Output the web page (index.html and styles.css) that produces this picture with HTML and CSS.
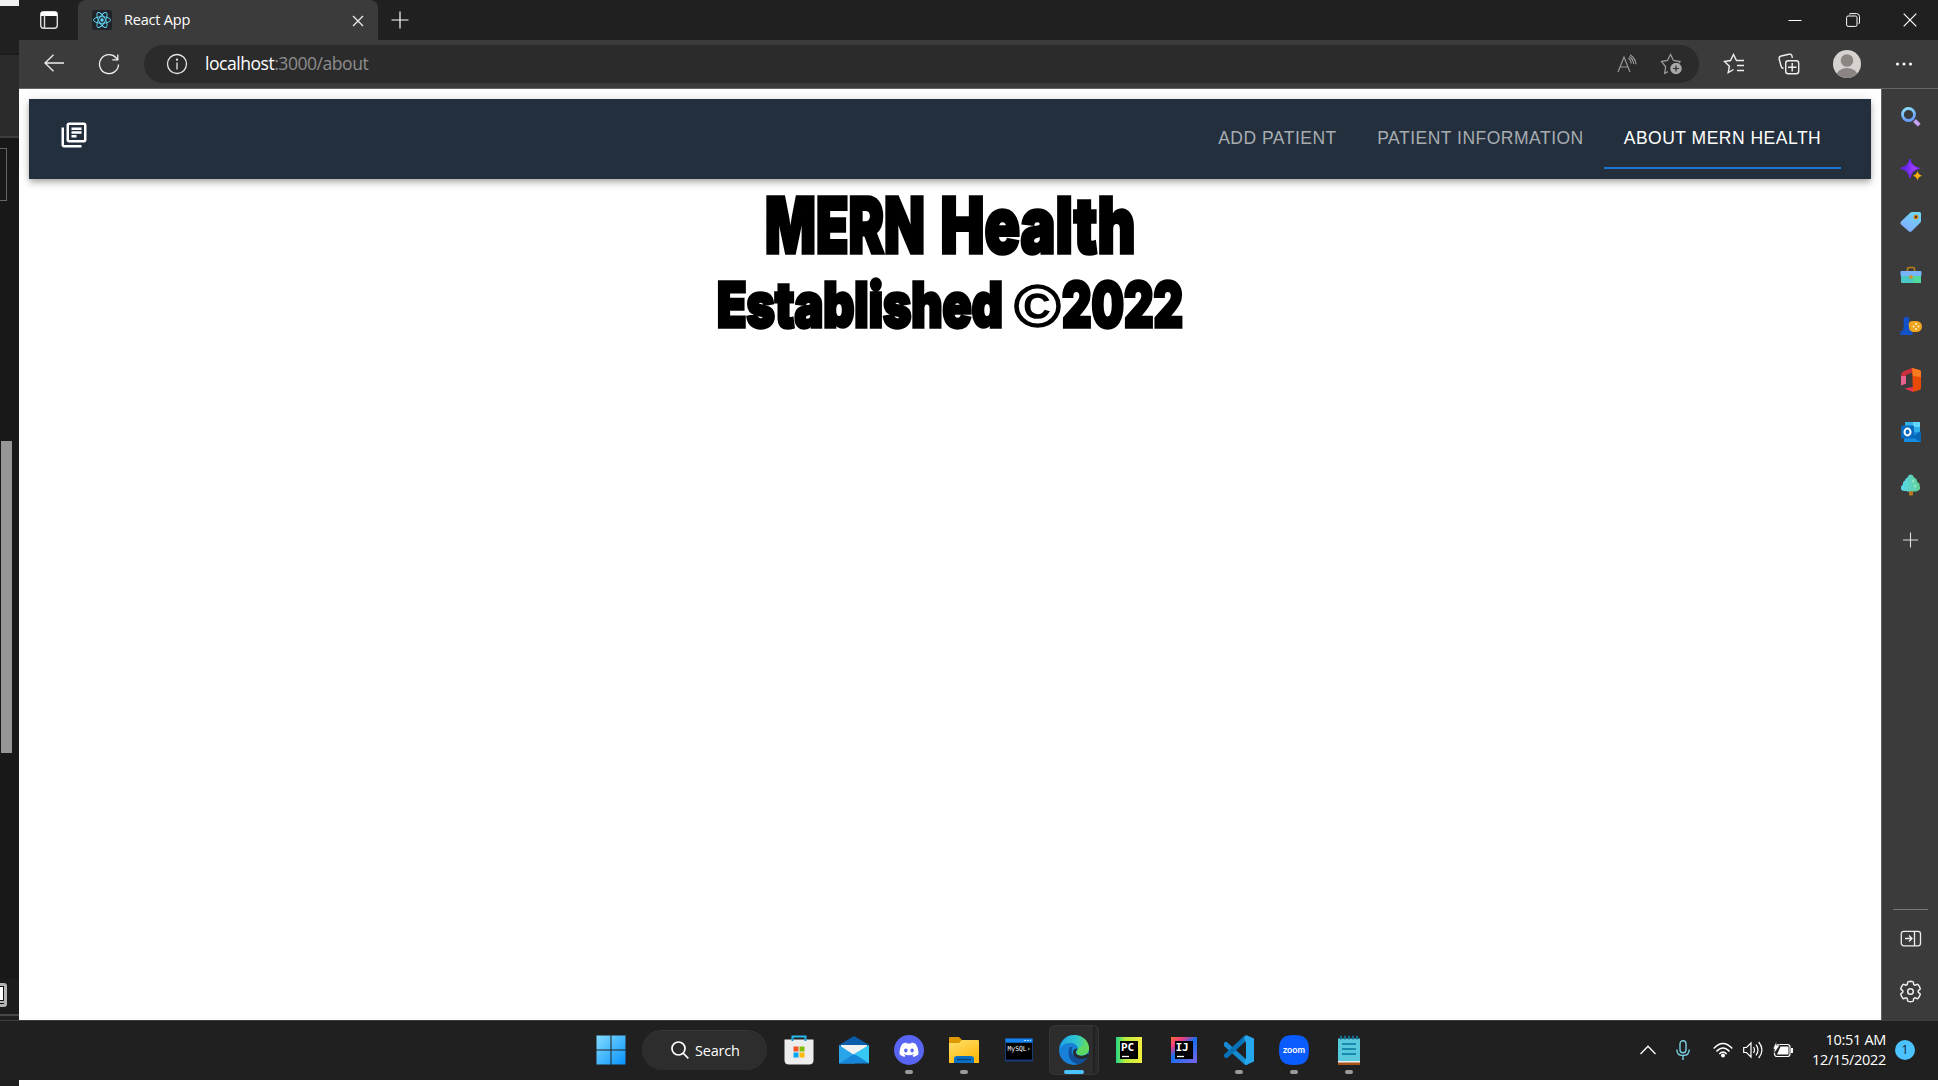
FILE: index.html
```html
<!DOCTYPE html>
<html lang="en">
<head>
<meta charset="utf-8">
<title>React App</title>
<link rel="stylesheet" href="styles.css">
</head>
<body>
<div class="desktop">
  <div class="screen">
    <aside class="backdrop">
      <div class="bd-white"></div><div class="bd-title"></div><div class="bd-tools"></div>
      <div class="bd-body"><div class="bd-box"></div><div class="bd-thumb"></div></div>
      <div class="bd-status"><svg width="19" height="35" viewBox="0 0 19 35"><rect x="-12" y="4" width="19" height="24" rx="3" fill="#b4b4b4"/><rect x="-10" y="7.500" width="13.500" height="14" fill="#fff" stroke="#111"/><path d="M0 24.500h4" stroke="#111"/></svg></div>
    </aside>
    <div class="browser">
      <header class="tabstrip">
        <svg class="workspaces" width="20" height="20" viewBox="0 0 20 20" fill="none" stroke="#ddd" stroke-width="1.4"><rect x="1.700" y="1.700" width="16.600" height="16.600" rx="3"/><path d="M2 4h16" stroke="#fff" stroke-width="4"/><path d="M5.500 5v13"/></svg>
        <div class="tab">
          <svg width="20" height="20" viewBox="0 0 20 20"><rect width="20" height="20" rx="2" fill="#20232a"/><g fill="none" stroke="#61dafb" stroke-width=".9"><ellipse cx="10" cy="10" rx="8.500" ry="3.300"/><ellipse cx="10" cy="10" rx="8.500" ry="3.300" transform="rotate(60 10 10)"/><ellipse cx="10" cy="10" rx="8.500" ry="3.300" transform="rotate(120 10 10)"/></g><circle cx="10" cy="10" r="1.700" fill="#61dafb"/></svg>
          <span class="tab-title">React App</span>
          <svg class="tab-close" width="12" height="12" viewBox="0 0 12 12" stroke="#eee" stroke-width="1.300"><path d="M1 1l10 10M11 1L1 11"/></svg>
        </div>
        <svg class="newtab" width="18" height="18" viewBox="0 0 18 18" stroke="#fff" stroke-width="1.200"><path d="M9 .5v17M.5 9h17"/></svg>
        <div class="winctl">
          <svg width="14" height="14" viewBox="0 0 14 14"><path d="M.5 7.500h13" stroke="#fff"/></svg>
          <svg width="14" height="14" viewBox="0 0 14 14" fill="none" stroke="#fff"><rect x=".6" y="3" width="10.400" height="10.400" rx="1.500"/><path d="M3 1.500Q3.500.6 5 .6h5.500q3 0 3 3V9q0 1.500-1 2"/></svg>
          <svg width="14" height="14" viewBox="0 0 14 14" stroke="#fff" stroke-width="1.200"><path d="M.7.7l12.600 12.600M13.300.7L.7 13.300"/></svg>
        </div>
      </header>
      <div class="toolbar">
        <svg class="back" width="20" height="18" viewBox="0 0 20 18" fill="none" stroke="#f0f0f0" stroke-width="1.300"><path d="M9.500.7L1 9l8.500 8.300M1 9h19"/></svg>
        <svg class="reload" width="22" height="22" viewBox="0 0 22 22" fill="none" stroke="#f0f0f0" stroke-width="1.300"><path d="M20.500 11.500A9.500 9.500 0 1 1 18 4.700l1.800 2M19.800 1.500v5.300h-5.500"/></svg>
        <div class="address">
          <svg width="22" height="22" viewBox="0 0 22 22" fill="none" stroke="#e6e6e6" stroke-width="1.300"><circle cx="11" cy="11" r="9.500"/><path d="M11 9.500v7"/><circle cx="11" cy="6.700" r=".5"/></svg>
          <span class="url"><b>localhost</b>:3000/about</span>
          <svg class="aloud" width="20" height="20" viewBox="0 0 20 20" fill="none" stroke="#999" stroke-width="1.200"><path d="M1 18L7 3l6 15M3.200 13h7.600M11.500 4q2.500 2 2.800 5.500M13 .8q5.500 3.500 6 9.500M12.300 2.500q4 2.500 4.400 7.500"/></svg>
          <svg class="addfav" width="22" height="22" viewBox="0 0 22 22"><path d="M8 18.700l-3.300 1.600.9-6.500L1.500 8.500l6-1L10.500 1.500l3 6 6.500 1-1.300 2" fill="none" stroke="#999" stroke-width="1.300"/><circle cx="16" cy="15.500" r="5.700" fill="#a8a8a8"/><path d="M16 12.500v6M13 15.500h6" stroke="#2b2b2b" stroke-width="1.200"/></svg>
        </div>
        <svg class="favs" width="22" height="22" viewBox="0 0 22 22" fill="none" stroke="#eee" stroke-width="1.400"><path d="M10.500 16.500l-5.300 3.200 1.200-6.500L1.500 8.500l6-1L10.500 1.500l3 6h7.500M14 12.500h7M14 17.500h7"/></svg>
        <svg class="colls" width="22" height="22" viewBox="0 0 22 22" fill="none" stroke="#eee" stroke-width="1.400"><rect x="7.700" y="7.700" width="13" height="13" rx="2.500"/><path d="M14.200 10v8.500M10 14.200h8.500M5.500 15.500q-2-.5-2.500-2.500L1.200 6q-.5-2.500 2-3L11 1.200q2.500-.5 3 2l.3 1.800"/></svg>
        <svg class="avatar" width="28" height="28" viewBox="0 0 28 28"><clipPath id="av"><circle cx="14" cy="14" r="14"/></clipPath><g clip-path="url(#av)"><rect width="28" height="28" fill="#d5d2cf"/><circle cx="14" cy="10.500" r="6.300" fill="#8b8683"/><ellipse cx="14" cy="25.500" rx="10.500" ry="7.500" fill="#8b8683"/></g></svg>
        <svg class="dots" width="18" height="4" viewBox="0 0 18 4" fill="#fff"><circle cx="2.500" cy="2" r="1.500"/><circle cx="9" cy="2" r="1.500"/><circle cx="15.500" cy="2" r="1.500"/></svg>
      </div>
      <div class="main">
        <main class="page">
          <nav class="appbar">
            <svg width="30" height="30" viewBox="0 0 24 24" fill="#fff"><path d="M4 6H2v14c0 1.100.9 2 2 2h14v-2H4V6zm16-4H8c-1.100 0-2 .9-2 2v12c0 1.100.9 2 2 2h12c1.100 0 2-.9 2-2V4c0-1.100-.9-2-2-2zm0 14H8V4h12v12zM10 9h8v2h-8zm0 3h4v2h-4zm0-6h8v2h-8z"/></svg>
            <div class="navtabs"><a class="t1">ADD PATIENT</a><a class="t2">PATIENT INFORMATION</a><a class="t3 active">ABOUT MERN HEALTH</a></div>
          </nav>
          <svg class="headline" width="500" height="160" viewBox="700 180 500 160">
            <g font-size="77.500"><text x="765" y="252.500" textLength="160" lengthAdjust="spacingAndGlyphs">MERN</text><text x="940.500" y="252.500" textLength="195" lengthAdjust="spacingAndGlyphs">Health</text></g>
            <g font-size="61.500"><text x="717" y="326.500" textLength="286" lengthAdjust="spacingAndGlyphs">Established</text><text class="copy" x="1014" y="327" font-size="60" textLength="47" lengthAdjust="spacingAndGlyphs">©</text><text x="1062" y="326.500" textLength="121" lengthAdjust="spacingAndGlyphs">2022</text></g>
          </svg>
        </main>
        <aside class="sidebar">
          <svg class="s" width="22" height="22" viewBox="0 0 22 22"><defs><linearGradient id="lens" x2=".3" y2="1"><stop stop-color="#8be0f8"/><stop offset="1" stop-color="#6b9dfa"/></linearGradient></defs><circle cx="8.500" cy="8.500" r="6" fill="none" stroke="url(#lens)" stroke-width="2.800"/><path d="M14.500 14.500l4.700 4.700" stroke="#c7a0f4" stroke-width="4"/></svg>
          <svg class="s" width="22" height="22" viewBox="0 0 22 22"><defs><linearGradient id="spark"><stop stop-color="#4218e8"/><stop offset="1" stop-color="#c44dfc"/></linearGradient></defs><path d="M10 0q1.500 7.500 9.500 9.300Q11.500 11 10 19 8.500 11 .5 9.300 8.500 7.500 10 0z" fill="url(#spark)" stroke="#7026f0"/><path d="M17.500 12q.8 3.800 4.500 4.700-3.700.9-4.500 4.700-.8-3.800-4.500-4.700 3.700-.9 4.500-4.700z" fill="#f5ad0c"/></svg>
          <svg class="s" width="22" height="22" viewBox="0 0 22 22"><defs><linearGradient id="tag" x1=".8" x2=".2" y2="1"><stop stop-color="#6fd8f6"/><stop offset="1" stop-color="#83a8ff"/></linearGradient></defs><path d="M12 1h7.500Q21 1 21 2.500V10q0 1-.8 1.700l-8.500 8.600q-1.500 1.300-3 0L1 13.500q-1.200-1.500 0-3L10.500 1.600Q11 1 12 1z" fill="url(#tag)"/><circle cx="16" cy="6" r="2.500" fill="#d58b20"/><circle cx="16" cy="6" r="1.200" fill="#553312"/></svg>
          <svg class="s" width="22" height="22" viewBox="0 0 22 22"><path d="M7.500 7V5q0-1.500 1.500-1.500h4q1.500 0 1.500 1.500v2" fill="none" stroke="#b87d16" stroke-width="1.700"/><rect x="1" y="9" width="20" height="10" rx="1" fill="#4ac8c6"/><rect x="13" y="11" width="8" height="8" fill="#4fd89f"/><rect x=".5" y="7" width="21" height="5" rx="1" fill="#78b4fa"/><circle cx="11" cy="13" r="2" fill="#c99631"/></svg>
          <svg class="s" width="22" height="22" viewBox="0 0 22 22"><rect x="7" y="5" width="15" height="11" rx="5.500" fill="#eda41f"/><g fill="#fff2c8"><circle cx="16" cy="8" r="1"/><circle cx="16" cy="13" r="1"/><circle cx="13.500" cy="10.500" r="1"/><circle cx="18.500" cy="10.500" r="1"/></g><path d="M3.500 4a3 3 0 1 1 5 2l1 1-1 1 1 6q4 2 3 5H0q-.3-3.500 3-5l1-6-1-1 1-1q-.7-.9-.5-2z" fill="#1252c8"/></svg>
          <svg class="s office" width="22" height="24" viewBox="0 0 22 24"><path d="M12 0L4 3Q1 4.500 1 7v10.500l5-2V8q0-1 1-1.500L13 4.500z" fill="#c92f3c"/><path d="M1 8v9.500l5-2V8z" fill="#e8628f"/><path d="M12 0l7.500 2Q21 2.500 21 4v16q0 1.500-1.500 2L13 24z" fill="#ea4a08"/><path d="M12 0l7.500 2Q21 2.500 21 4v5l-8-1z" fill="#f77c20"/><path d="M4.500 20.500L13 24v-5z" fill="#ed3250"/></svg>
          <svg class="s" width="22" height="22" viewBox="0 0 22 22"><path d="M5 1h15v10H5z" fill="#32afe8"/><path d="M13 1h7v5h-7z" fill="#60d6fc"/><path d="M4 11l17 0v10H4z" fill="#168be0"/><path d="M21 10l-9 6 9 5z" fill="#0867b5"/><rect x="1" y="4.500" width="13" height="13" rx="1" fill="#0869bd"/><ellipse cx="7.500" cy="11" rx="3" ry="3.400" fill="none" stroke="#fff" stroke-width="2"/></svg>
          <svg class="s" width="22" height="22" viewBox="0 0 22 22"><defs><linearGradient id="tree"><stop stop-color="#57d8ee"/><stop offset="1" stop-color="#62ce91"/></linearGradient></defs><path d="M9 16h4v5q-2 1-4 0z" fill="#b77619"/><path d="M10.500.5q2.500 0 3.500 3 3 1 3 4 3 2 2.500 4 2 4-2 5.500-3 1-6 0-3 1-5.500 0-5.500.5-5-3.500 0-2 2-3-.5-3 2-4 0-2 2.500-3 .8-3 3-3z" fill="url(#tree)"/><circle cx="13" cy="7" r="1.500" fill="#8fe3bd"/><circle cx="15" cy="12" r="1.500" fill="#8fe3bd"/></svg>
          <svg class="s plus" width="22" height="22" viewBox="0 0 22 22"><path d="M10.500 3.500v15M3 11h15" stroke="#ddd" stroke-width="1.100"/></svg>
          <i class="divider"></i>
          <svg class="b1" width="22" height="18" viewBox="0 0 22 18" fill="none" stroke="#eee" stroke-width="1.300"><rect x="1.300" y="1.300" width="19.200" height="14.500" rx="2.500"/><path d="M14.500 1v15M5 8.500h7M9 5.500l3 3-3 3"/></svg>
          <svg class="b2" width="25" height="25" viewBox="0 0 24 24" fill="none" stroke="#eee" stroke-width="1.400"><path d="M12.012 2.250c.734.008 1.465.093 2.182.253a.75.75 0 0 1 .582.649l.17 1.527a1.384 1.384 0 0 0 1.927 1.116l1.401-.615a.75.75 0 0 1 .85.174 9.792 9.792 0 0 1 2.204 3.792.75.75 0 0 1-.271.825l-1.242.916a1.381 1.381 0 0 0 0 2.226l1.243.915a.75.75 0 0 1 .272.826 9.797 9.797 0 0 1-2.204 3.792.75.75 0 0 1-.848.175l-1.407-.617a1.380 1.380 0 0 0-1.926 1.114l-.169 1.526a.75.75 0 0 1-.572.647 9.518 9.518 0 0 1-4.406 0 .75.75 0 0 1-.572-.647l-.168-1.524a1.382 1.382 0 0 0-1.926-1.110l-1.406.616a.75.75 0 0 1-.849-.175 9.798 9.798 0 0 1-2.204-3.796.75.75 0 0 1 .272-.826l1.243-.916a1.380 1.380 0 0 0 0-2.226l-1.243-.914a.75.75 0 0 1-.271-.826 9.793 9.793 0 0 1 2.204-3.792.75.75 0 0 1 .85-.174l1.400.615a1.387 1.387 0 0 0 1.930-1.118l.17-1.526a.75.75 0 0 1 .583-.65c.717-.159 1.450-.243 2.201-.252z"/><circle cx="12" cy="12" r="2.700"/></svg>
        </aside>
      </div>
    </div>
  </div>
  <footer class="taskbar">
    <svg class="start" width="30" height="30" viewBox="0 0 30 30"><defs><linearGradient id="win" x2="1" y2="1"><stop stop-color="#83dcff"/><stop offset="1" stop-color="#0792fb"/></linearGradient></defs><path d="M.5.5H14.500V14.500H.5zM15.500.5H29.500V14.500H15.500zM.5 15.500H14.500V29.500H.5zM15.500 15.500H29.500V29.500H15.500z" fill="url(#win)"/></svg>
    <div class="search"><svg width="18" height="18" viewBox="0 0 18 18" fill="none" stroke="#fff" stroke-width="1.700"><circle cx="7.500" cy="7.500" r="6.500"/><path d="M12 12l5.300 5.300"/></svg><span>Search</span></div>
    <div class="apps">
      <div class="app"><svg width="30" height="30" viewBox="0 0 30 30"><path d="M8.500 6V1.500h13V6" fill="none" stroke="#29b9ec" stroke-width="2"/><path d="M.5 4.500h29V25q0 4.500-4.500 4.500H5Q.5 29.500.5 25z" fill="#ededed"/><path d="M8.500 3v3M21.500 3v3" stroke="#1593c8" stroke-width="2"/><path d="M9.500 11.500h5v5h-5z" fill="#f35325"/><path d="M15.500 11.500h5v5h-5z" fill="#81bc06"/><path d="M9.500 17.500h5v5h-5z" fill="#05a6f0"/><path d="M15.500 17.500h5v5h-5z" fill="#ffba08"/></svg></div>
      <div class="app"><svg width="30" height="30" viewBox="0 0 30 30"><path d="M0 10L15 1l15 9v18H0z" fill="#0b5ca8"/><path d="M2 10h26v9L15 20 2 18z" fill="#f1f1f1"/><path d="M0 10l18 12-2 6.500H0z" fill="#2aa5ea"/><path d="M30 10L15 19l15 9.500z" fill="#37c7f5"/><path d="M0 28.500h30L15 19z" fill="#1787db"/></svg></div>
      <div class="app run"><svg width="30" height="30" viewBox="0 0 30 30"><circle cx="15" cy="15" r="15" fill="#5865f2"/><path transform="translate(5.500 5.300) scale(.79)" fill="#fff" d="M20.317 4.370a19.800 19.800 0 00-4.885-1.515.074.074 0 00-.079.037c-.211.375-.445.865-.608 1.250-1.845-.276-3.680-.276-5.487 0-.164-.393-.406-.874-.618-1.250a.077.077 0 00-.079-.037 19.736 19.736 0 00-4.885 1.515.07.07 0 00-.032.028C.533 9.046-.319 13.580.099 18.058a.082.082 0 00.031.056c2.053 1.508 4.041 2.423 5.993 3.029a.078.078 0 00.084-.028c.462-.630.873-1.295 1.226-1.994a.076.076 0 00-.042-.106c-.653-.248-1.274-.550-1.872-.892a.077.077 0 01-.008-.128c.126-.094.252-.192.372-.291a.074.074 0 01.078-.011c3.928 1.793 8.180 1.793 12.061 0a.074.074 0 01.079.010c.120.099.246.198.373.292a.077.077 0 01-.007.128 12.299 12.299 0 01-1.873.891.077.077 0 00-.041.107c.360.698.772 1.363 1.225 1.993a.076.076 0 00.084.029c1.961-.607 3.950-1.522 6.002-3.029a.077.077 0 00.031-.055c.500-5.177-.838-9.674-3.549-13.660a.061.061 0 00-.031-.029zM8.020 15.331c-1.183 0-2.157-1.086-2.157-2.419 0-1.333.956-2.419 2.157-2.419 1.211 0 2.176 1.095 2.157 2.419 0 1.333-.956 2.419-2.157 2.419zm7.975 0c-1.183 0-2.157-1.086-2.157-2.419 0-1.333.955-2.419 2.157-2.419 1.211 0 2.176 1.095 2.157 2.419 0 1.333-.946 2.419-2.157 2.419z"/></svg></div>
      <div class="app run"><svg width="30" height="30" viewBox="0 0 30 30"><defs><linearGradient id="fold" x2=".6" y2="1"><stop stop-color="#ffe16c"/><stop offset="1" stop-color="#ffb90f"/></linearGradient></defs><path d="M0 3q0-1 1-1h9l3 3h16v8H0z" fill="#dc9a00"/><path d="M0 8h10l3-3h16q1 0 1 1v22H0z" fill="url(#fold)"/><path d="M5 28v-4q0-3 3-3h14q3 0 3 3v4z" fill="#0a70c4"/><path d="M8 24.500h14" stroke="#04427c" stroke-width="1.400"/></svg></div>
      <div class="app"><svg width="30" height="30" viewBox="0 0 30 30"><rect x="1" y="3.500" width="28" height="23" fill="#173b78"/><rect x="1.500" y="3.500" width="27" height="4" fill="#1584ee"/><path d="M20 5.500h7" stroke="#a5d8ff" stroke-dasharray="2 1"/><rect x="2" y="8" width="26" height="16.500" fill="#000"/><text class="mono" x="3.500" y="15.500" font-size="7" textLength="23" lengthAdjust="spacingAndGlyphs">MySQL›</text></svg></div>
      <div class="app current"><svg width="30" height="30" viewBox="0 0 30 30"><defs><linearGradient id="ed"><stop stop-color="#1fa6e8"/><stop offset=".6" stop-color="#31c8cc"/><stop offset="1" stop-color="#6de044"/></linearGradient></defs><circle cx="15" cy="15" r="15" fill="#1681d6"/><path d="M1 14C2 4 9 0 15 0c9 0 15 6.500 15 13 0 5-3.500 7.500-7.500 7.500-4 0-5.500-1.500-5-3.500 1-1 1.500-2 1.300-4C18 9 14 7.500 10 8c-4 0-7 2-9 6z" fill="url(#ed)"/><path d="M11 12c-4 8 1 17 9 17 4-1 7-4 8.500-7-4 2-8 2.500-12 0-4-2.300-5-6-3-10z" fill="#114f98"/><path d="M18.500 13.500c-1 2-3 3.500-1 5.500 3 3 9 1.500 10.700-.3l1.800 1.300-1.300 2.200c-5 3-12 2-14-2-1.500-3 0-7 3.800-6.700z" fill="#262a2e"/><path d="M19 13.500c0 2-2 3-1.500 4.500 1 2.500 5 2.500 7 2 3.500-1 5.500-3.500 5.500-7l-5-3z" fill="#5cd964"/></svg></div>
      <div class="app"><svg width="30" height="30" viewBox="0 0 30 30"><defs><linearGradient id="pc"><stop stop-color="#21d789"/><stop offset=".35" stop-color="#b9ee3d"/><stop offset="1" stop-color="#f6ee40"/></linearGradient></defs><path d="M2 2h26v26H2z" fill="url(#pc)"/><path d="M6 6h18v18H6z"/><text class="jb" x="7" y="15.500">PC</text><path d="M8 21.500h7" stroke="#fff" stroke-width="1.300"/></svg></div>
      <div class="app"><svg width="30" height="30" viewBox="0 0 30 30"><defs><linearGradient id="ij" x2=".8" y2="1"><stop stop-color="#fc6d38"/><stop offset=".25" stop-color="#ef3a7e"/><stop offset=".5" stop-color="#146ff0"/><stop offset="1" stop-color="#6c64e8"/></linearGradient></defs><path d="M2 2h26v26H2z" fill="url(#ij)"/><path d="M6 6h18v18H6z"/><text class="jb" x="6.500" y="15.500">IJ</text><path d="M8 21.500h7" stroke="#fff" stroke-width="1.300"/></svg></div>
      <div class="app run"><svg width="30" height="30" viewBox="0 0 30 30"><path d="M2 9.500L22 27.500" stroke="#168bd2" stroke-width="5" stroke-linecap="round"/><path d="M2.500 20.500L21 3.500" stroke="#0872b8" stroke-width="5" stroke-linecap="round"/><path d="M22 0l8 3.500v23L22 30l-2-2 2-5V8l-2-5z" fill="#26a6ed"/></svg></div>
      <div class="app run"><svg width="30" height="30" viewBox="0 0 30 30"><path d="M15 0C26 0 30 4 30 15s-4 15-15 15S0 26 0 15 4 0 15 0z" fill="#0b5cff"/><text class="zm" x="4" y="17.500" textLength="22" lengthAdjust="spacingAndGlyphs">zoom</text></svg></div>
      <div class="app run"><svg width="30" height="30" viewBox="0 0 30 30"><path d="M4 25h22v5H4z" fill="#a4551b"/><path d="M4 24h22v3.500H4z" fill="#eee"/><path d="M4 3.500h22V26H4z" fill="#58c8dd"/><path d="M7 1.500v2M11 1.500v2M15 1.500v2M19 1.500v2M23 1.500v2" stroke="#126d91" stroke-width="2.200" stroke-linecap="round"/><path d="M8 9h14M8 14h14M8 19h14" stroke="#05769d" stroke-width="1.600"/></svg></div>
    </div>
    <div class="tray">
      <svg width="16" height="10" viewBox="0 0 16 10" fill="none" stroke="#fff" stroke-width="1.300"><path d="M.5 9L8 1.300 15.500 9"/></svg>
      <svg class="mic" width="14" height="20" viewBox="0 0 14 20" fill="none" stroke="#76cfe0" stroke-width="1.400"><rect x="4" y=".8" width="6" height="12" rx="3"/><path d="M.8 9.500Q.8 15.500 7 15.500t6.200-6M7 15.500V20"/></svg>
      <svg class="wifi" width="20" height="16" viewBox="0 0 20 16" fill="none" stroke="#fff" stroke-width="1.400"><path d="M.7 6.500q9.300-10 18.600 0M3.500 9.500q6.500-7 13 0M6.300 12q3.700-4 7.400 0"/><circle cx="10" cy="13.500" r="1.300" fill="#fff"/></svg>
      <svg class="vol" width="20" height="18" viewBox="0 0 20 18" fill="none" stroke="#fff" stroke-width="1.200"><path d="M.7 6.500h2.800L8 2v14l-4.500-4.500H.7zM10.500 6q2 3 0 6M13 3.700q4 5.300 0 10.600M15.700 1q6.500 8 0 16"/></svg>
      <svg class="bat" width="20" height="18" viewBox="0 0 20 18"><rect x="1.500" y="3.500" width="15.500" height="12" rx="2.500" fill="none" stroke="#fff" stroke-width="1.200"/><path d="M4 13.500L7.500 5.500h8v8zM18 7h2v5h-2z" fill="#fff"/><path d="M3.500 0v4H7L1.500 12V8H0z" fill="#fff" stroke="#202020" stroke-width=".6"/></svg>
      <div class="clock"><span>10:51 AM</span><span>12/15/2022</span></div>
      <div class="badge">1</div>
    </div>
  </footer>
</div>
</body>
</html>
```
FILE: styles.css
```css
* { box-sizing: border-box; }
body { margin: 0; background: #fff; font-family: "Open Sans", "Noto Sans", sans-serif; }
svg { display: block; flex: none; }
.desktop { width: 1938px; height: 1086px; overflow: hidden; background: linear-gradient(90deg, #202020 19px, #fff 19px); }
.screen { display: flex; height: 1020px; }

.backdrop { width: 19px; display: flex; flex-direction: column; background: #181818; flex: none; }
.bd-white { height: 6px; background: #f1f1f1; }
.bd-title { height: 48px; background: #202020; }
.bd-tools { height: 84px; background: #2b2b2b; border-top: 1px solid #191919; border-bottom: 2px solid #3d3d3d; }
.bd-body { height: 841px; padding-top: 10px; }
.bd-box { width: 7px; height: 53px; border: 1px solid #666; border-left: 0; }
.bd-thumb { width: 11px; height: 312px; margin: 240px 0 0 1px; background: #969696; }
.bd-status { height: 41px; background: #1c1c1c; border-bottom: 4px solid #202020; }
.bd-status svg { box-shadow: 0 2px #484848; }

.browser { flex: 1; display: flex; flex-direction: column; background: #3b3b3b; }
.tabstrip { height: 40px; background: #202020; display: flex; align-items: center; }
.workspaces { margin-left: 20px; }
.tab { width: 300px; height: 40px; margin-left: 19px; padding-left: 14px; display: flex; align-items: center; background: #3b3b3b; border-radius: 8px 8px 0 0; }
.tab-title { margin: -2px 0 0 12px; width: 228px; color: #fff; font-size: 14.500px; letter-spacing: -.2px; }
.tab-close { margin-top: 1px; }
.newtab { margin: -1px 0 0 13px; }
.winctl { margin: -1px 21px 0 auto; display: flex; gap: 43.500px; }
.toolbar { height: 48px; display: flex; align-items: center; padding: 0 0 1px 25px; }
.back { margin-top: -1px; }
.reload { margin-left: 34px; }
.address { width: 1555px; height: 38px; margin: 1px 0 0 24px; padding: 0 17px 1px 22px; border-radius: 19px; background: #2b2b2b; display: flex; align-items: center; flex: none; }
.url { margin: -1px 0 0 17px; color: #8d8d8d; font-size: 17.600px; letter-spacing: -.5px; }
.url b { color: #fff; font-weight: 400; }
.aloud { margin-left: auto; }
.addfav { margin-left: 23px; }
.favs { margin-left: 24px; }
.colls { margin-left: 33px; }
.avatar { margin-left: 33px; }
.dots { margin-left: 34px; }

.main { flex: 1; display: flex; border-top: 1px solid #666; }
.page { width: 1862px; padding: 10px; background: #fff; }
.appbar { height: 80px; padding: 0 30px; display: flex; justify-content: space-between; background: #232f3d; box-shadow: 0 2px 5px -1px rgba(0,0,0,.2), 0 5px 6px rgba(0,0,0,.14), 0 1px 12px rgba(0,0,0,.12); }
.appbar > svg { margin-top: 21px; }
.navtabs { display: flex; font: 17.500px "Liberation Sans", Arial, sans-serif; letter-spacing: .5px; height: 70px; }
.navtabs a { height: 70px; padding-top: 29px; color: #a7acb1; text-align: center; white-space: nowrap; }
.t1 { width: 159px; }
.t2 { width: 247px; }
.t3 { width: 237px; }
.navtabs .active { color: #fff; border-bottom: 2px solid #1976d2; }
.headline { margin: 1px auto 0; overflow: visible; font-family: Inter, sans-serif; font-weight: 900; stroke: #000; stroke-width: 3.400px; }
.copy { font-family: "Liberation Sans", sans-serif; font-weight: 400; stroke-width: 1.600px; }

.sidebar { width: 57px; border-left: 1px solid #626262; display: flex; flex-direction: column; align-items: center; padding: 17px 0 0 1px; }
.s { margin-bottom: 30.500px; }
.office { margin: -1px 0 29.500px; }
.plus { margin-top: 3px; }
.divider { width: 35px; height: 1px; background: #777; margin-top: auto; }
.b1 { margin-top: 20px; }
.b2 { margin: 31px 0 16px; }

.taskbar { height: 60px; padding-bottom: 2px; background: #202020; border-top: 1px solid #3e3e3e; display: flex; align-items: center; }
.start { margin-left: 595.500px; }
.search { width: 125px; height: 40px; margin-left: 16.500px; padding-left: 29px; border-radius: 20px; background: #2d2d2d; border-top: 1px solid #383838; display: flex; align-items: center; gap: 6px; color: #fff; font-size: 14.500px; letter-spacing: -.2px; }
.apps { display: flex; gap: 5px; margin-left: 7px; }
.app { width: 50px; height: 50px; display: grid; place-items: center; position: relative; border-radius: 6px; }
.run::after, .current::after { content: ""; position: absolute; bottom: 1px; left: 21px; width: 8px; height: 4px; border-radius: 2px; background: #9a9a9a; }
.current { background: linear-gradient(90deg, #2d2d2d 44px, #202020 44px, #202020 46px, #292929 46px); box-shadow: inset 0 0 0 1px #353535; }
.current::after { left: 15px; width: 20px; background: #4cc2ff; }
.mono { font-family: "DejaVu Sans Mono", monospace; fill: #fff; }
.jb { font: bold 11px "DejaVu Sans Mono", monospace; fill: #fff; }
.zm { font: bold 8.500px Lato, sans-serif; fill: #fff; }
.tray { margin: 0 23px 0 auto; display: flex; align-items: center; }
.mic { margin-left: 20px; }
.wifi { margin-left: 23px; }
.vol { margin-left: 10px; }
.bat { margin-left: 10px; }
.clock { width: 93px; display: flex; flex-direction: column; text-align: right; color: #fff; font-size: 14.500px; line-height: 20px; letter-spacing: -.3px; }
.badge { width: 20px; height: 20px; margin-left: 9px; border-radius: 50%; background: #4cc2ff; color: #123; font-size: 12px; line-height: 20px; text-align: center; }
```
